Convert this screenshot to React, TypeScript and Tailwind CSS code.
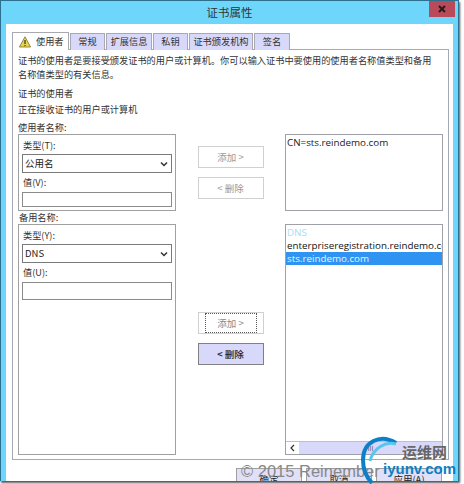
import React from "react";

const font = { fontFamily: '"Noto Sans CJK SC","Liberation Sans",sans-serif' };

function Select({ value }: { value: string }) {
  return (
    <div className="h-[19px] mx-[3px] border border-[#7a7a7a] bg-white flex items-center justify-between pl-[2px] pr-[3px] text-[9.5px] text-[#222]">
      <span>{value}</span>
      <svg width="8" height="6" viewBox="0 0 8 6"><path d="M1 1.5 L4 4.5 L7 1.5" fill="none" stroke="#333" strokeWidth="1.5" /></svg>
    </div>
  );
}

function Btn({ children, cls }: { children: React.ReactNode; cls: string }) {
  return <div className={`w-[66px] h-[22px] flex items-center justify-center text-[9.5px] ${cls}`}>{children}</div>;
}

export default function App() {
  const tabs = [
    ["常规", "w-[35px]"],
    ["扩展信息", "w-[46px]"],
    ["私钥", "w-[35px]"],
    ["证书颁发机构", "w-[64px]"],
    ["签名", "w-[36px]"],
  ];
  return (
    <div className="relative w-[464px] h-[484px] bg-white overflow-hidden" style={font}>
      <div className="w-[459px] h-[481px] bg-[#6fd6fb] border-l border-t border-[#2d6f8f] border-r border-r-[#2d6f8f] flex flex-col shadow-[1px_2px_2px_#555]">
        <div className="relative h-[23px] flex items-center justify-center text-[11.5px] text-[#333] shrink-0">
          证书属性
          <div className="absolute right-[3px] top-0 w-[26px] h-[16px] bg-[#b84a5a] flex items-center justify-center">
            <svg width="8" height="8" viewBox="0 0 8 8"><path d="M1 1 L7 7 M7 1 L1 7" stroke="#2a1a1a" strokeWidth="2" /></svg>
          </div>
        </div>
        <div className="mx-[5px] flex-1 bg-white flex flex-col px-[6px] pt-[9px]">
          <div className="flex h-[17px] items-end gap-px relative z-10">
            <div className="w-[57px] h-[18px] border border-b-0 border-[#a8a8b0] bg-white flex items-center pl-[6px] gap-[5px] text-[9.2px] text-[#333]">
              <svg width="12" height="12" viewBox="0 0 12 12">
                <path d="M6 .8 L11.6 11 H.4 Z" fill="#e8d44a" stroke="#77703a" strokeWidth=".8" />
                <path d="M6 4 V8 M6 9 V10" stroke="#333" strokeWidth="1.2" />
              </svg>
              使用者
            </div>
            {tabs.map(([t, w]) => (
              <div key={t} className={`${w} h-[17px] border border-b-0 border-[#a8a8b0] bg-[#d8d8fa] text-[9.2px] text-[#333] flex items-center justify-center`}>
                {t}
              </div>
            ))}
          </div>
          <div className="w-[437px] h-[411px] border border-[#a8a8b0] px-[5px] -mt-px flex flex-col text-[#333]">
            <p className="pt-[3px] text-[9.2px] leading-[14px] h-[33px] whitespace-nowrap">
              证书的使用者是要接受颁发证书的用户或计算机。你可以输入证书中要使用的使用者名称值类型和备用<br />名称值类型的有关信息。
            </p>
            <div className="text-[9.2px] leading-[14px] h-[16px] mt-[3px]">证书的使用者</div>
            <div className="text-[9.2px] leading-[14px] h-[18px]">正在接收证书的用户或计算机</div>
            <div className="text-[9.2px] leading-[14px] h-[14px]">使用者名称:</div>
            <div className="flex justify-between w-[425px] h-[77px]">
              <div className="w-[158px] h-[77px] border border-[#a0a0a0] pt-[1px] flex flex-col">
                <div className="h-[18px] pl-[4px] text-[9.2px] leading-[18px]">类型(T):</div>
                <Select value="公用名" />
                <div className="h-[19px] pl-[4px] text-[9.2px] leading-[19px]">值(V):</div>
                <div className="h-[15px] mx-[3px] border border-[#8a8a8a] bg-white" />
              </div>
              <div className="flex flex-col items-center gap-[9px] pt-[12px]">
                <Btn cls="border border-[#d0d0d0] bg-white text-[#999]">添加 &gt;</Btn>
                <Btn cls="border border-[#d0d0d0] bg-white text-[#999]">&lt; 删除</Btn>
              </div>
              <div className="w-[158px] h-[77px] border border-[#a0a0a8] text-[9.8px] pl-[1px] leading-[15px] text-[#222]" style={{ fontFamily: '"Open Sans",sans-serif' }}>
                CN=sts.reindemo.com
              </div>
            </div>
            <div className="text-[9.2px] leading-[13px] h-[13px] pl-[1px]">备用名称:</div>
            <div className="flex justify-between w-[425px] h-[231px]">
              <div className="w-[158px] h-[231px] border border-[#a0a0a0] flex flex-col pt-[1px]">
                <div className="h-[18px] pl-[4px] text-[9.2px] leading-[18px]">类型(Y):</div>
                <Select value="DNS" />
                <div className="h-[19px] pl-[4px] text-[9.2px] leading-[19px]">值(U):</div>
                <div className="h-[18px] mx-[3px] border border-[#8a8a8a] bg-white" />
              </div>
              <div className="flex flex-col items-center gap-[9px] pt-[88px]">
                <Btn cls="border border-[#d0d0d0] bg-white p-[1px] text-[#888]">
                  <span className="w-[52px] h-[20px] border border-dotted border-[#555] flex items-center justify-center">添加 &gt;</span>
                </Btn>
                <Btn cls="border border-[#808080] bg-[#d8d8fa] text-[#222] font-medium">&lt; 删除</Btn>
              </div>
              <div className="w-[158px] h-[231px] border border-[#a0a0a8] text-[9.8px] leading-[13px] flex flex-col overflow-hidden" style={{ fontFamily: '"Open Sans",sans-serif' }}>
                <div className="pl-[1px] pt-[1px] text-[#a8def5]">DNS</div>
                <div className="pl-[1px] whitespace-nowrap text-[#111] overflow-hidden">enterpriseregistration.reindemo.com</div>
                <div className="pl-[1px] h-[13px] bg-[#2f93f2] text-[#e8f4ff]">sts.reindemo.com</div>
                <div className="flex-1" />
                <div className="h-[13px] border-t border-[#c0c0c0] flex items-stretch">
                  <div className="w-[13px] flex items-center justify-center bg-white">
                    <svg width="5" height="8" viewBox="0 0 5 8"><path d="M4 1 L1 4 L4 7" fill="none" stroke="#333" strokeWidth="1.2" /></svg>
                  </div>
                  <div className="flex-1 bg-[#d8d8fa] flex items-center justify-center text-[7px] text-[#555]">III</div>
                </div>
              </div>
            </div>
          </div>
          <div className="flex justify-end gap-[4px] mt-[8px] pr-[5px]">
            {["确定", "取消", "应用(A)"].map((t) => (
              <div key={t} className="w-[66px] h-[13px] border border-[#a0a0a0] border-b-0 bg-[#e0e0f8] text-[9.5px] leading-[20px] text-center text-[#222] overflow-hidden">{t}</div>
            ))}
          </div>
        </div>
      </div>
      <div className="absolute left-[241px] top-[461px] text-[16.5px] leading-[20px] text-[#888] whitespace-nowrap" style={{ fontFamily: '"Liberation Sans",sans-serif' }}>
        © 2015 Reinember
      </div>
      <svg className="absolute left-[360px] top-[436px]" width="50" height="48" viewBox="0 0 50 48">
        <path d="M36 7 C20 -3 3 6 3 24 C3 33 6 41 12 47" fill="none" stroke="#0b7fc7" strokeWidth="4" />
        <path d="M36 8 C26 5 13 12 10 25" fill="none" stroke="#56c6ee" strokeWidth="3" />
      </svg>
      <div className="absolute left-[402px] top-[441px] text-[15px] leading-[22px] font-bold text-[#666]">运维网</div>
      <div className="absolute left-[383px] top-[459px] text-[15px] leading-[20px] font-bold text-[#0a7fc2] whitespace-nowrap" style={{ fontFamily: '"Liberation Sans",sans-serif' }}>
        iyunv.com
      </div>
    </div>
  );
}
